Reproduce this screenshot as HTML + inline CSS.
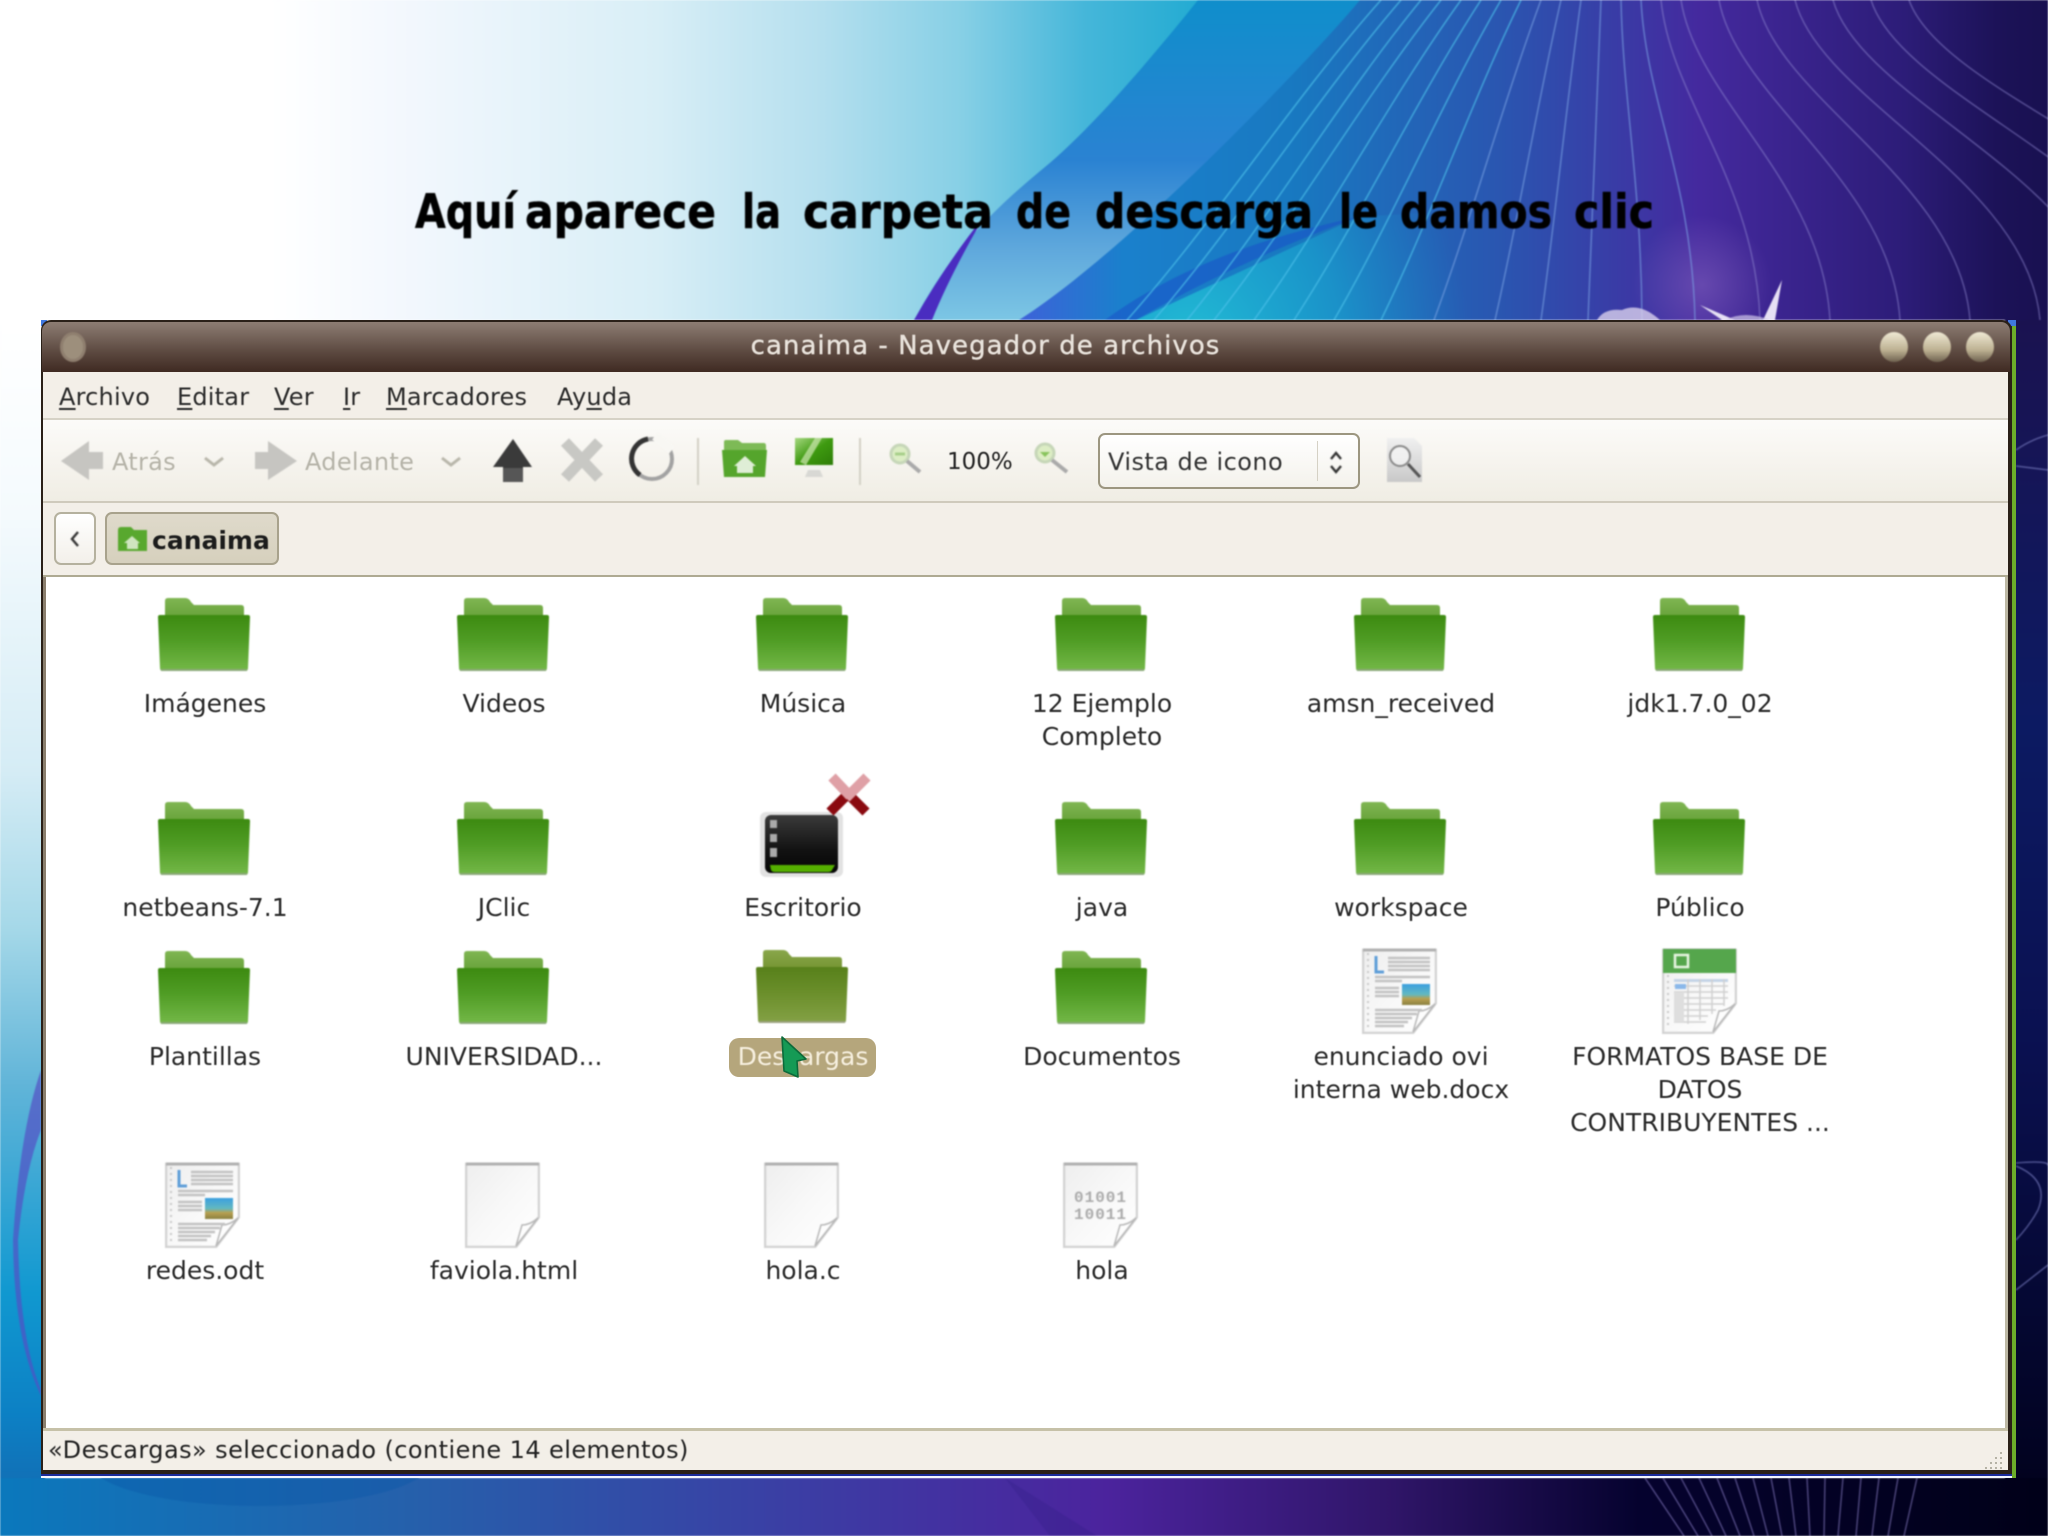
<!DOCTYPE html>
<html lang="es"><head><meta charset="utf-8"><title>canaima</title>
<style>
html,body{margin:0;padding:0;background:#fff}
body{width:2048px;height:1536px;position:relative;overflow:hidden;font-family:"DejaVu Sans","Liberation Sans",sans-serif;color:#222}
svg.f{position:absolute;left:0;top:0}
.a{position:absolute;white-space:nowrap}
.l{position:absolute;width:300px;margin-left:1px;text-align:center;font-size:25px;line-height:33px;color:#2a2a2a}
.m{position:absolute;top:381px;font-size:24px;line-height:32px;color:#2b2b2b;letter-spacing:.2px}
.m u{text-underline-offset:3px}
</style></head><body>
<svg class="f" width="2048" height="1536" viewBox="0 0 2048 1536" style="filter:blur(.7px)">
<defs>
<linearGradient id="top" x1="0" x2="2048" y1="0" y2="0" gradientUnits="userSpaceOnUse">
<stop offset="0" stop-color="#fff"/><stop offset=".13" stop-color="#fff"/><stop offset=".2" stop-color="#f2f7fd"/><stop offset=".32" stop-color="#d8eef6"/><stop offset=".4" stop-color="#b5dfee"/><stop offset=".47" stop-color="#86cfe5"/><stop offset=".53" stop-color="#45b6d9"/><stop offset=".6" stop-color="#1aa8d0"/>
</linearGradient>
<linearGradient id="sa" x1="0" x2="0" y1="0" y2="320" gradientUnits="userSpaceOnUse">
<stop offset="0" stop-color="#0f8ecb"/><stop offset=".5" stop-color="#2a82d2"/><stop offset=".78" stop-color="#5fa8dc"/><stop offset="1" stop-color="#7cc6e4"/>
</linearGradient>
<linearGradient id="sb" x1="1020" x2="2048" y1="0" y2="0" gradientUnits="userSpaceOnUse">
<stop offset="0" stop-color="#3d62d8"/><stop offset=".1" stop-color="#1a80cc"/><stop offset=".27" stop-color="#1878c0"/><stop offset=".47" stop-color="#2a55b0"/><stop offset=".66" stop-color="#44299e"/><stop offset=".86" stop-color="#2c1c78"/><stop offset=".95" stop-color="#1c1258"/><stop offset="1" stop-color="#181050"/>
</linearGradient>
<radialGradient id="cy" gradientUnits="userSpaceOnUse" cx="1190" cy="345" r="280">
<stop offset="0" stop-color="#22c0d4" stop-opacity=".95"/><stop offset=".55" stop-color="#1aa6d0" stop-opacity=".6"/><stop offset="1" stop-color="#1a90cc" stop-opacity="0"/>
</radialGradient>
<linearGradient id="left" x1="0" x2="0" y1="320" y2="1536" gradientUnits="userSpaceOnUse">
<stop offset="0" stop-color="#fff"/><stop offset=".16" stop-color="#f4fafd"/><stop offset=".37" stop-color="#d5ecf5"/><stop offset=".5" stop-color="#a5d8e8"/><stop offset=".63" stop-color="#60b4d8"/><stop offset=".8" stop-color="#1098d0"/><stop offset=".9" stop-color="#0c80c4"/><stop offset="1" stop-color="#1563ab"/>
</linearGradient>
<linearGradient id="bot" x1="0" x2="2048" y1="0" y2="0" gradientUnits="userSpaceOnUse">
<stop offset="0" stop-color="#0a78bc"/><stop offset=".2" stop-color="#2560ab"/><stop offset=".38" stop-color="#3a3fa4"/><stop offset=".54" stop-color="#4b239d"/><stop offset=".68" stop-color="#2f1568"/><stop offset=".8" stop-color="#05022e"/><stop offset="1" stop-color="#000018"/>
</linearGradient>
<linearGradient id="rgt" x1="0" x2="0" y1="320" y2="1536" gradientUnits="userSpaceOnUse">
<stop offset="0" stop-color="#1a1250"/><stop offset=".33" stop-color="#0c1a62"/><stop offset=".6" stop-color="#0a1050"/><stop offset="1" stop-color="#000018"/>
</linearGradient>
<radialGradient id="glow"><stop offset="0" stop-color="#9a78c8" stop-opacity=".4"/><stop offset="1" stop-color="#9a78c8" stop-opacity="0"/></radialGradient>
</defs>
<rect width="2048" height="320" fill="url(#top)"/>
<path d="M1198 0C1150 60 1090 130 1045 167S950 250 914 320H2048V0Z" fill="url(#sa)"/>
<path d="M985 215Q945 265 914 320H932Q950 275 985 215Z" fill="#4a2cc0"/>
<path d="M1360 0C1319 50 1130 250 1019 320H2048V0Z" fill="url(#sb)"/>
<path d="M1136 320L1358 217L1620 200V320Z" fill="url(#cy)"/>
<path d="M1358 217Q1230 265 1136 320H1105Q1200 250 1358 217Z" fill="#1a50c8" opacity=".55"/>
<ellipse cx="1702" cy="285" rx="70" ry="70" fill="url(#glow)"/>
<g fill="none" stroke-width="1.5">
<g stroke="#4cc0ea" opacity=".7">
<path d="M1381 0C1292 100 1216 220 1127 320"/><path d="M1401 0C1315 100 1240 220 1154 320"/><path d="M1421 0C1339 100 1269 220 1187 320"/><path d="M1441 0C1362 100 1293 220 1214 320"/><path d="M1461 0C1389 100 1326 220 1254 320"/><path d="M1481 0C1416 100 1359 220 1294 320"/><path d="M1501 0C1443 100 1392 220 1334 320"/><path d="M1521 0C1472 100 1430 220 1381 320"/>
</g>
<g stroke="#7ba4e4" opacity=".6">
<path d="M1541 0C1504 100 1471 220 1434 320"/><path d="M1561 0C1538 100 1518 220 1495 320"/><path d="M1581 0C1567 100 1555 220 1541 320"/><path d="M1601 0C1596 100 1593 220 1588 320"/><path d="M1621 0C1623 100 1641 180 1642 320"/><path d="M1641 0C1646 100 1692 180 1695 320"/>
</g>
<g stroke="#8f88d0" opacity=".5">
<path d="M1661 0C1671 100 1755 180 1760 320"/><path d="M1681 0C1696 100 1822 180 1830 320"/><path d="M1719 0C1737 100 1891 180 1900 320"/><path d="M1757 0C1778 100 1959 180 1970 320"/><path d="M1795 0C1820 100 2028 180 2040 320"/><path d="M1833 0C1861 100 2096 180 2110 320"/><path d="M1871 0C1902 100 2165 180 2180 320"/><path d="M1909 0C1944 100 2243 180 2260 320"/>
</g>
</g>
<path d="M1597 320Q1604 308 1622 310Q1640 302 1660 320Z" fill="#d8d0ec" opacity=".8"/>
<path d="M1700 305L1735 320H1722Z" fill="#e6e0f4"/><path d="M1782 280L1775 320H1763Z" fill="#e6e0f4"/>
<path d="M1725 320Q1745 310 1770 320Z" fill="#cfc6e8" opacity=".7"/>
<rect x="0" y="320" width="45" height="1216" fill="url(#left)"/>
<path d="M41 1070Q20 1130 13 1240Q14 1340 41 1396V1390Q20 1340 18 1240Q25 1170 41 1130Z" fill="#5450c4" opacity=".7"/>
<rect x="2005" y="320" width="43" height="1216" fill="url(#rgt)"/>
<g fill="none" stroke="#7c80c4" stroke-width="1.5" opacity=".6">
<path d="M2016 450Q2030 440 2048 435"/><path d="M2016 466L2048 470"/><path d="M2016 1163Q2050 1160 2048 1166"/><path d="M2016 1166Q2050 1180 2038 1210Q2030 1225 2016 1240"/><path d="M2016 1290L2048 1265"/>
</g>
<rect x="0" y="1478" width="2048" height="58" fill="url(#bot)"/>
<ellipse cx="260" cy="1462" rx="170" ry="44" fill="#0a58a8" opacity=".4"/>
<path d="M1005 1478L1097 1536H1050Z" fill="#2a1d80" opacity=".25"/>
<g fill="none" stroke="#8c80c8" stroke-width="1.3" opacity=".6">
<path d="M1645 1478L1684 1536"/><path d="M1663 1478L1698 1536"/><path d="M1681 1478L1712 1536"/><path d="M1699 1478L1726 1536"/><path d="M1717 1478L1740 1536"/><path d="M1735 1478L1754 1536"/><path d="M1753 1478L1768 1536"/><path d="M1771 1478L1782 1536"/><path d="M1789 1478L1796 1536"/><path d="M1807 1478L1810 1536"/><path d="M1825 1478L1824 1536"/><path d="M1843 1478L1838 1536"/><path d="M1861 1478L1856 1536"/><path d="M1879 1478L1872 1536"/><path d="M1898 1478L1888 1536"/><path d="M1917 1478L1904 1536"/>
</g>
<g font-family="'DejaVu Sans',sans-serif" font-weight="700" font-size="47" fill="#000" stroke="#000" stroke-width=".6">
<text x="415" y="228" textLength="101" lengthAdjust="spacingAndGlyphs">Aquí</text>
<text x="525" y="228" textLength="191" lengthAdjust="spacingAndGlyphs">aparece</text>
<text x="742" y="228" textLength="39" lengthAdjust="spacingAndGlyphs">la</text>
<text x="803" y="228" textLength="190" lengthAdjust="spacingAndGlyphs">carpeta</text>
<text x="1016" y="228" textLength="55" lengthAdjust="spacingAndGlyphs">de</text>
<text x="1095" y="228" textLength="218" lengthAdjust="spacingAndGlyphs">descarga</text>
<text x="1339" y="228" textLength="39" lengthAdjust="spacingAndGlyphs">le</text>
<text x="1400" y="228" textLength="152" lengthAdjust="spacingAndGlyphs">damos</text>
<text x="1574" y="228" textLength="80" lengthAdjust="spacingAndGlyphs">clic</text>
</g>
</svg>

<!-- window -->
<div class="a" style="left:41px;top:1474px;width:1975px;height:4px;background:linear-gradient(#1a2a9a 50%,#f4f6ff 50%)"></div>
<div class="a" style="left:2012px;top:320px;width:4px;height:1158px;background:#6cae2a"></div>
<div class="a" style="left:2008px;top:320px;width:8px;height:6px;background:#3f78e0"></div>
<div class="a" style="left:41px;top:320px;width:6px;height:6px;background:#3f78e0"></div>
<div class="a" style="left:41px;top:320px;width:1971px;height:1154px;background:#2a2018;border-radius:10px 10px 0 0"></div>
<div class="a" style="left:42px;top:322px;width:1968px;height:50px;background:linear-gradient(#8d7d73,#5c4940 60%,#3f2a22);border-radius:9px 9px 0 0"></div>
<div class="a" style="left:43px;top:372px;width:1965px;height:48px;background:#f3efe8;border-bottom:2px solid #d6d2c6;box-sizing:border-box"></div>
<div class="a" style="left:43px;top:420px;width:1965px;height:83px;background:linear-gradient(#fcfbf9,#f0ede4);border-bottom:2px solid #cfcabc;box-sizing:border-box"></div>
<div class="a" style="left:43px;top:503px;width:1965px;height:74px;background:#f3efe8;border-bottom:2px solid #aeaa92;box-sizing:border-box"></div>
<div class="a" style="left:43px;top:577px;width:3px;height:851px;background:#8a7f6e"></div>
<div class="a" style="left:2005px;top:577px;width:3px;height:851px;background:#bdb8a4"></div>
<div class="a" style="left:46px;top:577px;width:1959px;height:851px;background:#fff"></div>
<div class="a" style="left:43px;top:1428px;width:1965px;height:42px;background:#f3efe8;border-top:3px solid #c6c1a8;box-sizing:border-box"></div>
<div class="a" style="left:54px;top:512px;width:42px;height:53px;background:linear-gradient(#fff,#f3f0ea);border:2px solid #b5b19e;border-radius:7px;box-sizing:border-box"></div>
<div class="a" style="left:105px;top:512px;width:174px;height:53px;background:linear-gradient(#dfdacb,#d6d0bd);border:2px solid #a8a28c;border-radius:7px;box-sizing:border-box"></div>
<div class="a" style="left:1098px;top:433px;width:262px;height:56px;background:linear-gradient(#fff,#f4f2ec);border:2px solid #9c9680;border-radius:7px;box-sizing:border-box"></div>
<div class="a" style="left:1317px;top:441px;width:1px;height:40px;background:#d5d1c5"></div>

<svg class="f" width="2048" height="1536" viewBox="0 0 2048 1536" style="filter:blur(.9px)">
<defs>
<linearGradient id="fb" x1="0" x2="0" y1="0" y2="1"><stop offset="0" stop-color="#7fb552"/><stop offset="1" stop-color="#64a036"/></linearGradient>
<linearGradient id="ff" x1="0" x2="0" y1="0" y2="1"><stop offset="0" stop-color="#3c8a10"/><stop offset=".45" stop-color="#4f9c24"/><stop offset="1" stop-color="#74b848"/></linearGradient>
<linearGradient id="sf" x1="0" x2="0" y1="0" y2="1"><stop offset="0" stop-color="#57801a"/><stop offset=".45" stop-color="#6a8e2a"/><stop offset="1" stop-color="#84a145"/></linearGradient>
<linearGradient id="sbk" x1="0" x2="0" y1="0" y2="1"><stop offset="0" stop-color="#88a64a"/><stop offset="1" stop-color="#72922f"/></linearGradient>
<linearGradient id="pg" x1="0" x2="1" y1="0" y2="1"><stop offset="0" stop-color="#eeeeee"/><stop offset=".5" stop-color="#f8f8f8"/><stop offset="1" stop-color="#fff"/></linearGradient>
<linearGradient id="ph" x1="0" x2="0" y1="0" y2="1"><stop offset="0" stop-color="#3b9fe0"/><stop offset=".5" stop-color="#62b8c0"/><stop offset=".7" stop-color="#b8a050"/><stop offset="1" stop-color="#8a8040"/></linearGradient>
<linearGradient id="btn" x1="0" x2="0" y1="0" y2="1"><stop offset="0" stop-color="#efe9d4"/><stop offset=".6" stop-color="#bdb192"/><stop offset="1" stop-color="#6f6250"/></linearGradient>
<linearGradient id="mon" x1="0" x2="1" y1="0" y2="1"><stop offset="0" stop-color="#a6d880"/><stop offset=".5" stop-color="#3e9a10"/><stop offset="1" stop-color="#2d7d08"/></linearGradient>
<linearGradient id="dark" x1="0" x2="0" y1="0" y2="1"><stop offset="0" stop-color="#3a3a3a"/><stop offset=".6" stop-color="#121212"/><stop offset="1" stop-color="#050505"/></linearGradient>
<linearGradient id="doc" x1="0" x2="0" y1="0" y2="1"><stop offset="0" stop-color="#f0f0f0"/><stop offset="1" stop-color="#c8c8c8"/></linearGradient>
<symbol id="folder" viewBox="0 0 92 73" width="92" height="73">
<path d="M7 3Q7 0 10 0H27Q31 0 33 4L36 7H83Q86 7 86 10V22H7Z" fill="url(#fb)"/>
<path d="M0 19Q0 17 2 17H90Q92 17 92 19L90 70Q90 73 87 73H5Q2 73 2 70Z" fill="url(#ff)"/>
<path d="M3 71H89V73H3Z" fill="#8aa878"/>
</symbol>
<symbol id="folderS" viewBox="0 0 92 73" width="92" height="73">
<path d="M7 3Q7 0 10 0H27Q31 0 33 4L36 7H83Q86 7 86 10V22H7Z" fill="url(#sbk)"/>
<path d="M0 19Q0 17 2 17H90Q92 17 92 19L90 70Q90 73 87 73H5Q2 73 2 70Z" fill="url(#sf)"/>
<path d="M3 71H89V73H3Z" fill="#9aa27e"/>
</symbol>
<symbol id="page" viewBox="0 0 75 86" width="75" height="86">
<path d="M1 2H74V55L51 85H1Z" fill="url(#pg)" stroke="#d2d2d2" stroke-width="2.5"/>
<path d="M1 2H74" stroke="#b0b0b0" stroke-width="3"/>
<path d="M73 56L51 84L57 63Q65 63 73 56Z" fill="#fdfdfd" stroke="#b8b8b8" stroke-width="1.5"/>
</symbol>
<symbol id="odt" viewBox="0 0 75 86" width="75" height="86">
<use href="#page"/>
<path d="M6 5V80" stroke="#c8c8c8" stroke-width="2" stroke-dasharray="2 4"/>
<path d="M14 8V24H22" stroke="#5f9ed8" stroke-width="3" fill="none"/>
<path d="M26 10H68M26 14H68M26 18H68M26 22H68M13 29H68M13 33H40M13 40H37M13 44H37M13 48H37M13 62H60M13 66H55M13 70H50M13 74H46M13 78H42" stroke="#c2c2c2" stroke-width="2.6"/>
<rect x="40" y="36" width="28" height="21" fill="url(#ph)"/>
</symbol>
<symbol id="ods" viewBox="0 0 75 86" width="75" height="86">
<use href="#page"/>
<rect x="1" y="1" width="73" height="24" fill="#55a64c"/>
<rect x="13" y="7" width="13" height="12" fill="none" stroke="#e8f5e2" stroke-width="2.5"/>
<path d="M12 31H66V34H12Z" fill="#c4d4e6"/>
<path d="M12 38H66M12 44H66M12 50H66M12 56H62M12 62H54M12 68H46M12 74H44M26 31V76M38 31V72M50 31V66M62 31V58" stroke="#d0d0d0" stroke-width="1.5"/>
<path d="M6 27V80" stroke="#c8c8c8" stroke-width="2" stroke-dasharray="2 4"/>
<rect x="13" y="36" width="11" height="5" fill="#8ab8ea"/><rect x="12" y="44" width="10" height="30" fill="#dedede"/>
</symbol>
</defs>

<ellipse cx="73" cy="347" rx="13" ry="15" fill="#8f7f6f"/>
<ellipse cx="73" cy="347" rx="10" ry="12" fill="#9d8f7c"/>
<ellipse cx="1894" cy="347" rx="14" ry="15" fill="url(#btn)"/>
<ellipse cx="1937" cy="347" rx="14" ry="15" fill="url(#btn)"/>
<ellipse cx="1980" cy="347" rx="14" ry="15" fill="url(#btn)"/>

<!-- toolbar -->
<path d="M61 461L89 441V452H103V469H89V480Z" fill="#c6c5c1"/>
<path d="M205 458L214 465L223 458" fill="none" stroke="#b8b6aa" stroke-width="3"/>
<path d="M297 461L268 441V452H255V469H268V480Z" fill="#c6c5c1"/>
<path d="M442 458L451 465L460 458" fill="none" stroke="#b8b6aa" stroke-width="3"/>
<path d="M513 439L532 467H523V482H503V467H493Z" fill="#3a3a3a"/>
<path d="M503 468H523V482H503Z" fill="#565656"/>
<path d="M565 442L599 478M599 442L565 478" stroke="#c8c8c4" stroke-width="11" fill="none"/>
<circle cx="652" cy="459" r="20" fill="none" stroke="#a2a2a2" stroke-width="4"/>
<path d="M648 439A20 20 0 0 0 640 475" fill="none" stroke="#333" stroke-width="5"/>
<path d="M655 436L672 450" stroke="#f8f7f3" stroke-width="9"/>
<rect x="697" y="438" width="2" height="47" fill="#d3d0c6"/>
<rect x="859" y="438" width="2" height="47" fill="#d3d0c6"/>
<path d="M724 442Q724 440 726 440H738L742 443H764Q766 443 766 446V450H724Z" fill="#7dba56"/>
<path d="M722 450H767L765 477H724Z" fill="#55a52c"/>
<path d="M745 456L756 466H753V473H737V466H734Z" fill="#dfeed6"/>
<rect x="795" y="438" width="38" height="27" fill="url(#mon)"/>
<path d="M800 462L815 438H822L806 465Z" fill="#cfe8b4" opacity=".7"/>
<path d="M795 465H833V470H795Z" fill="#f2f3ee"/>
<path d="M808 470H820L823 477H805Z" fill="#d8d8d4"/>
<circle cx="900" cy="454" r="9" fill="#dcedc4" stroke="#c6d6b8" stroke-width="3"/>
<path d="M895 454H905" stroke="#a8d08a" stroke-width="3"/>
<path d="M907 461L920 472" stroke="#aaa" stroke-width="4"/>
<circle cx="1045" cy="453" r="9" fill="#dcedc4" stroke="#c6d6b8" stroke-width="3"/>
<path d="M1040 452L1045 457L1050 452Z" fill="#88c45c"/>
<path d="M1052 460L1067 472" stroke="#aaa" stroke-width="4"/>
<path d="M1331 459L1336 453L1341 459M1331 466L1336 472L1341 466" fill="none" stroke="#333" stroke-width="2.4"/>
<path d="M1387 438H1414L1422 446V482H1387Z" fill="url(#doc)"/>
<circle cx="1400" cy="456" r="10" fill="#f6f6f6" fill-opacity=".7" stroke="#8a8a8a" stroke-width="2"/>
<path d="M1408 464L1420 477" stroke="#555" stroke-width="3"/>
<path d="M78 532L72 539L78 546" fill="none" stroke="#333" stroke-width="2.4"/>
<path d="M118 530Q118 527 121 527H131L134 530H147V551H118Z" fill="#58a82e"/>
<path d="M132 536L140 543H138V549H127V543H124Z" fill="#cfe5c0"/>

<!-- folders -->
<use href="#folder" x="158" y="598"/><use href="#folder" x="457" y="598"/><use href="#folder" x="756" y="598"/><use href="#folder" x="1055" y="598"/><use href="#folder" x="1354" y="598"/><use href="#folder" x="1653" y="598"/>
<use href="#folder" x="158" y="802"/><use href="#folder" x="457" y="802"/><use href="#folder" x="1055" y="802"/><use href="#folder" x="1354" y="802"/><use href="#folder" x="1653" y="802"/>
<use href="#folder" x="158" y="951"/><use href="#folder" x="457" y="951"/><use href="#folderS" x="756" y="950"/><use href="#folder" x="1055" y="951"/>
<use href="#odt" x="1362" y="948"/><use href="#ods" x="1662" y="948"/>
<use href="#odt" x="165" y="1162"/><use href="#page" x="465" y="1162"/><use href="#page" x="764" y="1162"/>
<use href="#page" x="1063" y="1162"/>
<text x="1074" y="1202" font-family="'Liberation Mono',monospace" font-size="16" font-weight="700" fill="#aaa" letter-spacing="1">01001</text>
<text x="1074" y="1219" font-family="'Liberation Mono',monospace" font-size="16" font-weight="700" fill="#aaa" letter-spacing="1">10011</text>

<!-- escritorio -->
<rect x="760" y="812" width="83" height="65" rx="6" fill="#cfcfcf" opacity=".6"/>
<rect x="765" y="815" width="73" height="58" rx="6" fill="url(#dark)"/>
<path d="M770 865H835L832 870Q831 872 828 872H775Q772 872 771 870Z" fill="#55b000"/>
<rect x="770" y="820" width="7" height="8" fill="#aaa"/><rect x="770" y="834" width="7" height="8" fill="#aaa"/><rect x="770" y="848" width="7" height="9" fill="#aaa"/>
<path d="M848 794L866 812M848 794L830 812" stroke="#8a0a10" stroke-width="10" fill="none"/>
<path d="M832 777L850 796M867 777L846 798" stroke="#dfa0a6" stroke-width="10" fill="none"/>
</svg>

<div class="a" style="left:729px;top:1038px;width:147px;height:39px;background:#b5a67c;border-radius:10px"></div>

<div style="filter:blur(.55px)">
<div class="a" style="left:700px;top:328px;width:571px;font-size:26px;line-height:36px;color:#e9e3dc;text-align:center;letter-spacing:1.05px;-webkit-text-stroke:.4px #e9e3dc">canaima - Navegador de archivos</div>
<div class="m" style="left:59px"><u>A</u>rchivo</div>
<div class="m" style="left:177px"><u>E</u>ditar</div>
<div class="m" style="left:274px"><u>V</u>er</div>
<div class="m" style="left:343px"><u>I</u>r</div>
<div class="m" style="left:386px"><u>M</u>arcadores</div>
<div class="m" style="left:557px">Ay<u>u</u>da</div>
<div class="a" style="left:112px;top:446px;font-size:24px;line-height:32px;color:#b5b3a8;letter-spacing:.3px">Atrás</div>
<div class="a" style="left:305px;top:446px;font-size:24px;line-height:32px;color:#b5b3a8;letter-spacing:.3px">Adelante</div>
<div class="a" style="left:947px;top:446px;font-size:23px;line-height:32px;color:#222">100%</div>
<div class="a" style="left:1108px;top:446px;font-size:24px;line-height:32px;color:#333;letter-spacing:.45px">Vista de icono</div>
<div class="a" style="left:152px;top:525px;font-size:25px;line-height:32px;color:#1c1c1c;font-weight:700">canaima</div>

<div class="l" style="left:54px;top:687px">Imágenes</div>
<div class="l" style="left:353px;top:687px">Videos</div>
<div class="l" style="left:652px;top:687px">Música</div>
<div class="l" style="left:951px;top:687px">12 Ejemplo<br>Completo</div>
<div class="l" style="left:1250px;top:687px">amsn_received</div>
<div class="l" style="left:1549px;top:687px">jdk1.7.0_02</div>
<div class="l" style="left:54px;top:891px">netbeans-7.1</div>
<div class="l" style="left:353px;top:891px">JClic</div>
<div class="l" style="left:652px;top:891px">Escritorio</div>
<div class="l" style="left:951px;top:891px">java</div>
<div class="l" style="left:1250px;top:891px">workspace</div>
<div class="l" style="left:1549px;top:891px">Público</div>
<div class="l" style="left:54px;top:1040px">Plantillas</div>
<div class="l" style="left:353px;top:1040px">UNIVERSIDAD...</div>
<div class="l" style="left:652px;top:1040px;color:#f6efdf">Descargas</div>
<div class="l" style="left:951px;top:1040px">Documentos</div>
<div class="l" style="left:1250px;top:1040px">enunciado ovi<br>interna web.docx</div>
<div class="l" style="left:1549px;top:1040px">FORMATOS BASE DE<br>DATOS<br>CONTRIBUYENTES ...</div>
<div class="l" style="left:54px;top:1254px">redes.odt</div>
<div class="l" style="left:353px;top:1254px">faviola.html</div>
<div class="l" style="left:652px;top:1254px">hola.c</div>
<div class="l" style="left:951px;top:1254px">hola</div>
<div class="a" style="left:48px;top:1434px;font-size:24px;line-height:32px;color:#222;letter-spacing:.42px">«Descargas» seleccionado (contiene 14 elementos)</div>
</div>

<svg class="f" width="2048" height="1536" viewBox="0 0 2048 1536">
<path d="M782 1037L806 1059L797 1061L798 1077L784 1071Z" fill="#159a55" stroke="#0c6a3a" stroke-width="1.6" stroke-linejoin="round"/>
<g fill="#b5b2a5"><rect x="2000" y="1452" width="2" height="2"/><rect x="1995" y="1457" width="2" height="2"/><rect x="2000" y="1457" width="2" height="2"/><rect x="1990" y="1462" width="2" height="2"/><rect x="1995" y="1462" width="2" height="2"/><rect x="2000" y="1462" width="2" height="2"/><rect x="1985" y="1467" width="2" height="2"/><rect x="1990" y="1467" width="2" height="2"/><rect x="1995" y="1467" width="2" height="2"/><rect x="2000" y="1467" width="2" height="2"/></g>
</svg>
</body></html>
